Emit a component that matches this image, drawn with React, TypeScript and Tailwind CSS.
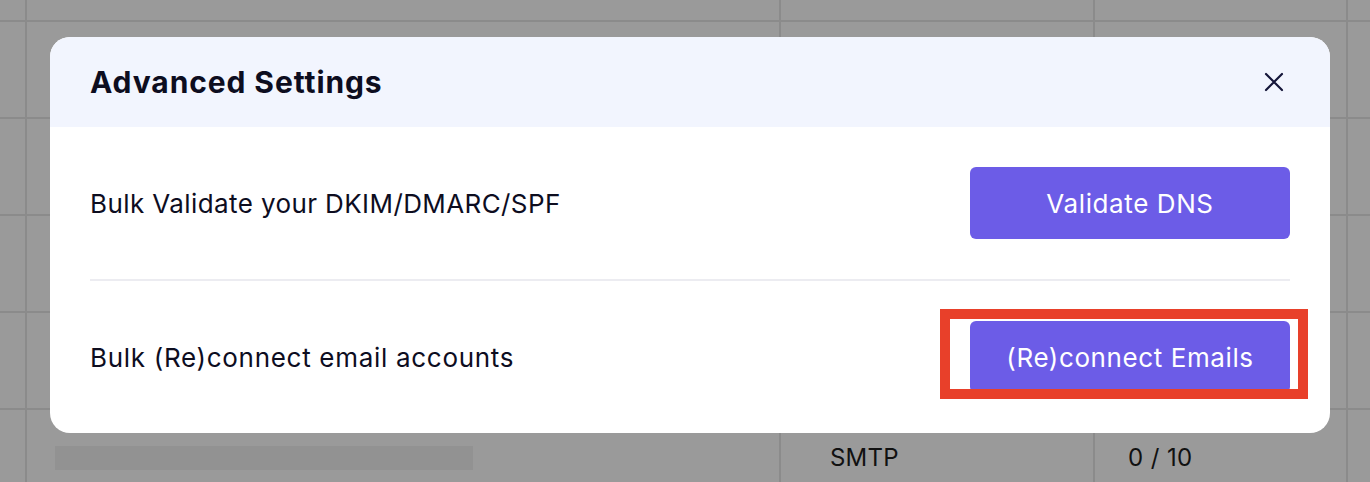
import React from "react";

const font = { fontFamily: "Inter, 'Noto Sans', sans-serif" };

function BgRow({ first }: { first?: boolean }) {
  return (
    <div className={`flex ${first ? "h-[20px]" : "h-[97px] border-t-2 border-[#8b8b8b]"}`}>
      <div className="w-[27px] shrink-0 border-r-2 border-[#8b8b8b]" />
      <div className="w-[754px] shrink-0 border-r-2 border-[#8b8b8b]" />
      <div className="w-[314px] shrink-0 border-r-2 border-[#8b8b8b]" />
      <div className="w-[253px] shrink-0 border-r-2 border-[#8b8b8b]" />
      <div className="flex-1" />
    </div>
  );
}

export default function App() {
  return (
    <div className="relative w-[1370px] h-[482px] overflow-hidden bg-[#9a9a9a]" style={font}>
      <div className="flex flex-col">
        <BgRow first />
        <BgRow />
        <BgRow />
        <BgRow />
        <BgRow />
        <div className="flex h-[97px] border-t-2 border-[#8b8b8b]">
          <div className="w-[27px] shrink-0 border-r-2 border-[#8b8b8b]" />
          <div className="w-[754px] shrink-0 border-r-2 border-[#8b8b8b] flex items-center pl-[28px]">
            <div className="w-[418px] h-[24px] bg-[#929292]" />
          </div>
          <div className="w-[314px] shrink-0 border-r-2 border-[#8b8b8b] flex items-center pl-[49px] text-[24px] tracking-[0.2px] text-[#111]">
            SMTP
          </div>
          <div className="w-[253px] shrink-0 border-r-2 border-[#8b8b8b] flex items-center pl-[33px] text-[24px] tracking-[0.4px] text-[#111]">
            0 / 10
          </div>
          <div className="flex-1" />
        </div>
      </div>

      <div className="absolute left-[50px] top-[37px] w-[1280px] rounded-[20px] bg-white overflow-hidden">
        <div className="h-[90px] bg-[#f2f5fe] flex items-center justify-between pl-[40px] pr-[46px]">
          <h2 className="text-[30px] leading-none font-bold text-[#0d0d1f] tracking-[0.9px]">Advanced Settings</h2>
          <svg width="20" height="20" viewBox="0 0 20 20" fill="none" stroke="#15163a" strokeWidth="2.2" strokeLinecap="round">
            <path d="M2 2L18 18M18 2L2 18" />
          </svg>
        </div>
        <div className="px-[40px]">
          <div className="flex items-center justify-between py-[40px] border-b-2 border-[#ececf1]">
            <span className="text-[26px] tracking-[0.4px] text-[#0d0d1f]">Bulk Validate your DKIM/DMARC/SPF</span>
            <button className="w-[320px] h-[72px] rounded-[6px] bg-[#6c5ce7] text-white text-[26px] tracking-[0.6px]">
              Validate DNS
            </button>
          </div>
          <div className="flex items-center justify-between py-[40px]">
            <span className="text-[26px] tracking-[0.7px] text-[#0d0d1f]">Bulk (Re)connect email accounts</span>
            <div className="relative">
              <button className="w-[320px] h-[72px] rounded-[6px] bg-[#6c5ce7] text-white text-[26px] tracking-[0.6px]">
                (Re)connect Emails
              </button>
              <div className="absolute left-[-30px] top-[-12px] w-[368px] h-[90px] border-[10px] border-[#e8402a] pointer-events-none" />
            </div>
          </div>
        </div>
      </div>
    </div>
  );
}
